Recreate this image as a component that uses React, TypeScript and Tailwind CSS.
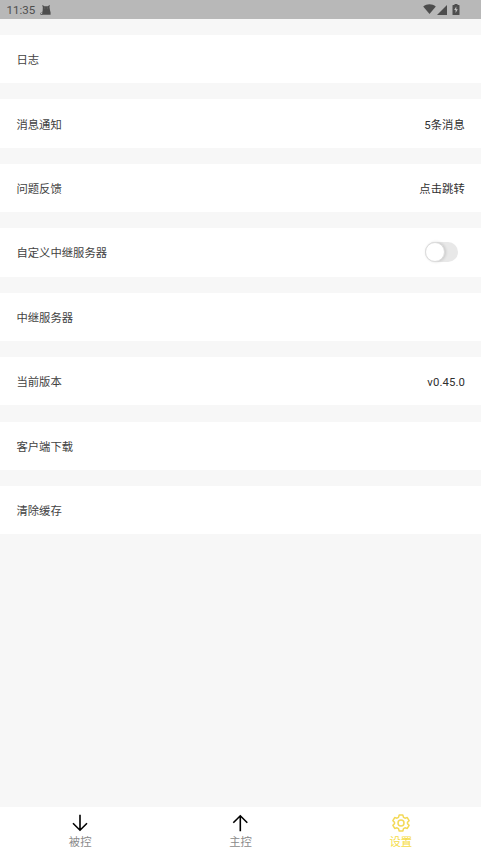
import React from 'react';

type Row = { label: string; value?: string; toggle?: boolean };

const rows: Row[] = [
  { label: '日志' },
  { label: '消息通知', value: '5条消息' },
  { label: '问题反馈', value: '点击跳转' },
  { label: '自定义中继服务器', toggle: true },
  { label: '中继服务器' },
  { label: '当前版本', value: 'v0.45.0' },
  { label: '客户端下载' },
  { label: '清除缓存' },
];

function StatusBar() {
  return (
    <header className="flex h-[19px] shrink-0 items-center bg-[#b8b8b8] pr-[21.500px] pl-[6.500px] text-[#4d4d4d]">
      <span className="pt-[2px] text-[11.5px] leading-none">11:35</span>
      <svg className="mt-[1px] ml-[4.500px] h-[10px] w-[11px]" viewBox="0 0 11 10" fill="currentColor">
        <path d="M2.700 0l1.500 1.300h3.700L9.400 0l.4.3-.3 2 .5 3 .6 2.200v2.200H2.200V7.800l.5-2.500.1-3L2.300.4z" />
        <path d="M2.6 9.5H.8L.4 8.4l1-1" fill="none" stroke="currentColor" strokeWidth=".8" />
        <path d="M4.4 3h.8M7 3h.8" stroke="#8b8b8b" strokeWidth=".6" />
      </svg>
      <div className="ml-auto flex items-center">
        <svg className="-mt-[1px] h-[10px] w-[13px]" viewBox="0 0 13 10" fill="currentColor">
          <path d="M.2 2.6C3.8-.5 9.2-.5 12.8 2.6L6.5 10z" />
        </svg>
        <svg className="ml-[1px] h-[10px] w-[10px]" viewBox="0 0 10 10" fill="currentColor">
          <path d="M0 10L10 0v10z" />
        </svg>
        <svg className="-mt-[1px] ml-[5px] h-[11px] w-[8px]" viewBox="0 0 8 11" fill="currentColor">
          <path d="M2.5 0h3v1H7q.5 0 .5.6v8.8q0 .6-.5.6H1q-.5 0-.5-.6V1.600Q.5 1 1 1h1.500z" />
          <path d="M4.300 2.500L2.200 6h1.400v3l2.200-3.700H4.300z" fill="#c4c4c4" />
        </svg>
      </div>
    </header>
  );
}

function Toggle() {
  return (
    <button
      type="button"
      role="switch"
      aria-checked={false}
      aria-label="自定义中继服务器"
      className="mr-[7px] flex h-5 w-[33px] items-center rounded-full bg-[#e8e8e8]"
    >
      <span className="size-5 rounded-full border border-[#dcdcdc] bg-white shadow-[1px_0px_3px_rgba(0,0,0,0.15)]" />
    </button>
  );
}

function Arrow({ up = false }: { up?: boolean }) {
  return (
    <svg className="size-[18px]" viewBox="0 0 18 18" fill="none" stroke="#000" strokeWidth="1.6">
      {up ? (
        <path d="M9.300 17.200V2M2.300 8.800l7-7 7 7" />
      ) : (
        <path d="M9 .8V16M2 9.200l7 7 7-7" />
      )}
    </svg>
  );
}

function Gear() {
  return (
    <svg className="size-[18px]" viewBox="0 0 18 18" fill="none" stroke="#f3d957" strokeWidth="1.500" strokeLinejoin="round">
      <path d="M7.200 1h3.600l.7 2.300 1.500.9 2.300-.6 1.800 3.100L15.500 8.300v1.400l1.600 1.600-1.800 3.100-2.300-.6-1.500.9-.7 2.300H7.200l-.7-2.300-1.500-.9-2.300.6-1.800-3.100 1.600-1.600V8.300L.9 6.700l1.800-3.100 2.300.6 1.500-.9z" />
      <circle cx="9" cy="9" r="3" />
    </svg>
  );
}

function Tab({ label, active = false, children }: { label: string; active?: boolean; children: React.ReactNode }) {
  return (
    <button
      type="button"
      className={`flex flex-col items-center pt-[7px] ${active ? 'text-[#f5dc45]' : 'text-[#8a8a8a]'}`}
    >
      {children}
      <span className="mt-[2px] text-[11.35px] leading-4">{label}</span>
    </button>
  );
}

export default function App() {
  return (
    <div className="flex h-[855px] w-full flex-col overflow-hidden bg-[#f7f7f7] font-[Roboto,'Noto_Sans_CJK_SC',sans-serif]">
      <StatusBar />
      <main className="flex flex-1 flex-col gap-[16.26px] pt-4">
        {rows.map((row) => (
          <div
            key={row.label}
            className="flex h-[48.2px] shrink-0 items-center justify-between bg-white pr-4 pl-[16.4px] text-[11.35px] leading-4 text-[#424242]"
          >
            <span className="pt-[2px]">{row.label}</span>
            {row.value && <span className="pt-[2px] text-[#303030] tracking-[0.1px]">{row.value}</span>}
            {row.toggle && <Toggle />}
          </div>
        ))}
      </main>
      <nav className="grid h-12 shrink-0 grid-cols-3 bg-white">
        <Tab label="被控"><Arrow /></Tab>
        <Tab label="主控"><Arrow up /></Tab>
        <Tab label="设置" active><Gear /></Tab>
      </nav>
    </div>
  );
}
